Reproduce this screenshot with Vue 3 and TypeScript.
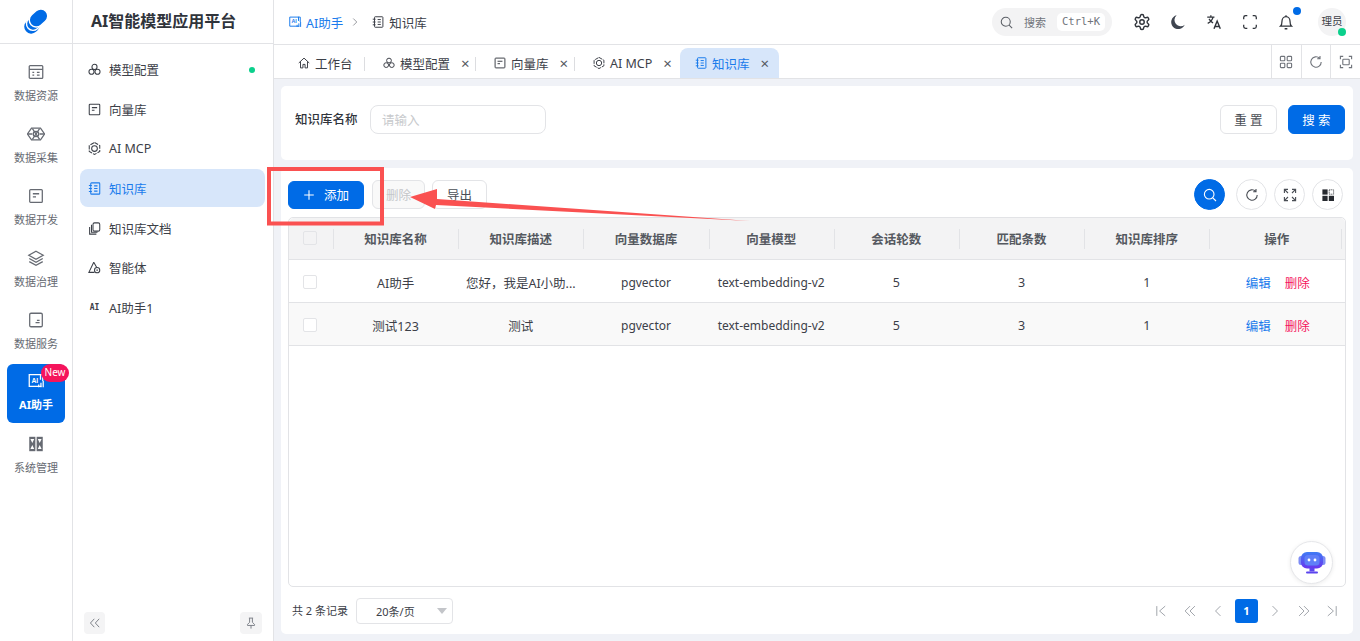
<script setup lang="ts">
const railItems = [
  { label: '数据资源', icon: 'resource' },
  { label: '数据采集', icon: 'collect' },
  { label: '数据开发', icon: 'vector' },
  { label: '数据治理', icon: 'layers' },
  { label: '数据服务', icon: 'service' },
  { label: 'AI助手', icon: 'ai', active: true },
  { label: '系统管理', icon: 'system' },
]

const menuItems = [
  { label: '模型配置', icon: 'model', dot: true },
  { label: '向量库', icon: 'vector' },
  { label: 'AI MCP', icon: 'mcp' },
  { label: '知识库', icon: 'book', active: true },
  { label: '知识库文档', icon: 'docs' },
  { label: '智能体', icon: 'agent' },
  { label: 'AI助手1', icon: 'ai1' },
]

const tabs = [
  { label: '工作台', icon: 'home', width: 91, pad: 23, closable: false },
  { label: '模型配置', icon: 'model', width: 111, pad: 17, closable: true },
  { label: '向量库', icon: 'vector', width: 99, pad: 17, closable: true },
  { label: 'AI MCP', icon: 'mcp', width: 105, pad: 17, closable: true },
  { label: '知识库', icon: 'book', width: 99, pad: 14, closable: true, active: true },
]

const columns = ['知识库名称', '知识库描述', '向量数据库', '向量模型', '会话轮数', '匹配条数', '知识库排序', '操作']

const rows = [
  { name: 'AI助手', desc: '您好，我是AI小助...', db: 'pgvector', model: 'text-embedding-v2', turns: 5, match: 3, sort: 1 },
  { name: '测试123', desc: '测试', db: 'pgvector', model: 'text-embedding-v2', turns: 5, match: 3, sort: 1 },
]

const icons: Record<string, string> = {
  resource: '<rect x="2.5" y="3" width="15" height="14" rx="1"/><path d="M2.5 7h15M6 10.5h2M11 10.5h3M6 13.5h2M11 13.5h3"/>',
  collect: '<path d="M5 3.500h10l4.500 6.500-4.500 6.500H5L.5 10z"/><path d="M6 4l8 12M14 4 6 16M1 10h5M14 10h5"/><circle cx="10" cy="10" r="3"/>',
  vector: '<rect x="3" y="3" width="14" height="14" rx="1"/><path d="M6.500 7.500h7M6.500 11h3.500"/>',
  layers: '<path d="M10 2.500 18 7l-8 4.500L2 7z"/><path d="M2.500 10.500 10 14.800l7.500-4.300M2.500 14 10 18l7.500-4"/>',
  service: '<rect x="3" y="2.500" width="14" height="15" rx="1.500"/><path d="M9.500 13h4.500M11 10.500h3"/>',
  ai: '<path d="M16 16H2.500V3h15v7"/><text x="5" y="12" font-size="7.500" font-weight="700" stroke="none" fill="currentColor" font-family="Liberation Sans">AI</text><path d="M15 2.500v6M13 14v3M15.500 12v5M18 10v7"/>',
  system: '<g stroke="none"><rect x="2.500" y="2" width="6.800" height="16" fill="currentColor"/><rect x="10.700" y="2" width="6.800" height="16" fill="currentColor"/><path d="M3.800 4.500h4.200L5.900 9zM3.800 15.500h4.200L5.900 11zM12 4.500h4.200L14.100 9zM12 15.500h4.200L14.100 11z" fill="#fff"/></g>',
  model: '<circle cx="10" cy="6.500" r="3.400"/><circle cx="6" cy="13" r="3.400"/><circle cx="14" cy="13" r="3.400"/>',
  mcp: '<path d="M10 2 17 6v8l-7 4-7-4V6z" stroke-dasharray="5.500 1.500"/><circle cx="10" cy="10" r="3.800"/>',
  book: '<rect x="5" y="2.500" width="12" height="15" rx="1"/><path d="M2.500 6h4M2.500 10h4M2.500 14h4M9.500 6.500h4.500M9.500 10h4.500M9.500 13.500h4.500"/>',
  docs: '<rect x="8" y="2.500" width="9" height="11" rx="2"/><path d="M6 5v10h8M3.500 8v9.500h9"/>',
  agent: '<path d="M9 3 2.500 16.500H10M9 3l4 7"/><circle cx="13.500" cy="13.500" r="3.500"/><path d="M12.500 13.500h2"/>',
  home: '<path d="M2.500 10 10 3l7.500 7M5 8v9h3.500v-5h3v5H15V8"/>',
  settings: '<g transform="scale(.833)"><path d="M12.220 2h-.44a2 2 0 0 0-2 2v.18a2 2 0 0 1-1 1.730l-.43.25a2 2 0 0 1-2 0l-.15-.08a2 2 0 0 0-2.730.73l-.22.38a2 2 0 0 0 .73 2.730l.15.1a2 2 0 0 1 1 1.720v.51a2 2 0 0 1-1 1.740l-.15.09a2 2 0 0 0-.73 2.730l.22.38a2 2 0 0 0 2.730.73l.15-.08a2 2 0 0 1 2 0l.43.25a2 2 0 0 1 1 1.730V20a2 2 0 0 0 2 2h.44a2 2 0 0 0 2-2v-.18a2 2 0 0 1 1-1.730l.43-.25a2 2 0 0 1 2 0l.15.08a2 2 0 0 0 2.730-.73l.22-.39a2 2 0 0 0-.73-2.730l-.15-.08a2 2 0 0 1-1-1.740v-.5a2 2 0 0 1 1-1.740l.15-.09a2 2 0 0 0 .73-2.730l-.22-.38a2 2 0 0 0-2.730-.73l-.15.08a2 2 0 0 1-2 0l-.43-.25a2 2 0 0 1-1-1.730V4a2 2 0 0 0-2-2z" stroke-width="1.900"/><circle cx="12" cy="12" r="3" stroke-width="1.900"/></g>',
  bell: '<path d="M4 14.500c1.200-1 1.500-2.500 1.500-5C5.500 6.500 7.300 4 10 4s4.500 2.500 4.500 5.500c0 2.500.3 4 1.500 5z"/><path d="M8.500 17.500h3M10 2.500V4"/>',
  screen: '<path d="M3 7V5a2 2 0 0 1 2-2h2M13 3h2a2 2 0 0 1 2 2v2M17 13v2a2 2 0 0 1-2 2h-2M7 17H5a2 2 0 0 1-2-2v-2"/>',
  translate: '<path d="M2.500 4.500h8M6.500 2.500v2M9 4.500c-.8 3-3 5.500-6 7M4.500 6.500c1 2 2.500 3.500 4.500 4.500"/><path d="M10 17.500l3.500-8.500 3.500 8.500M11.200 15h4.600" stroke-width="1.600"/>',
  grid: '<rect x="3" y="3" width="5.500" height="5.500" rx="1"/><rect x="11.500" y="3" width="5.500" height="5.500" rx="1"/><rect x="3" y="11.500" width="5.500" height="5.500" rx="1"/><rect x="11.500" y="11.500" width="5.500" height="5.500" rx="1"/>',
  refresh: '<path d="M16.500 10a6.500 6.500 0 1 1-2-4.700M15 2.500v3.500h-3.500"/>',
  capture: '<path d="M3 6.500V3h3.500M13.500 3H17v3.500M17 13.500V17h-3.500M6.500 17H3v-3.500"/><rect x="6" y="6.500" width="8" height="7" rx="1"/>',
  search: '<circle cx="9" cy="9" r="6"/><path d="m13.500 13.500 4 4"/>',
  expand: '<path d="M3 7.500V3h4.500M3 3l4.500 4.500M12.500 3H17v4.500M17 3l-4.500 4.500M3 12.500V17h4.500M3 17l4.500-4.500M17 12.500V17h-4.500M17 17l-4.500-4.500"/>',
  first: '<path d="M4 3v14M16 3 8 10l8 7"/>',
  prev2: '<path d="M10 3 3 10l7 7M17 3l-7 7 7 7"/>',
  prev: '<path d="M13.500 3 6.500 10l7 7"/>',
  next: '<path d="m6.500 3 7 7-7 7"/>',
  next2: '<path d="m3 3 7 7-7 7M10 3l7 7-7 7"/>',
  last: '<path d="M16 3v14M4 3l8 7-8 7"/>',
  pin: '<path d="M7 3h6M8 3v6l-3 3v1.500h10V12l-3-3V3M10 13.500V18"/>',
  chevrons: '<path d="M9 4 3.500 10 9 16M16 4l-5.500 6 5.500 6"/>',
  plus: '<path d="M10 2v16M2 10h16"/>',
}
</script>

<template>
  <div class="app">
    <aside class="rail">
      <div class="logo">
        <svg width="26" height="26" viewBox="0 0 26 26">
          <rect x="1" y="10" width="16" height="14" rx="7" transform="rotate(-42 9 17)" fill="#006be6" />
          <rect x="3" y="7" width="17" height="13" rx="6.500" transform="rotate(-42 11.500 13.500)" fill="#006be6" stroke="#fff" stroke-width="1.400" />
          <rect x="5.500" y="2" width="20" height="14" rx="7" transform="rotate(-42 15.500 9)" fill="#006be6" stroke="#fff" stroke-width="1.400" />
        </svg>
      </div>
      <nav class="rail-nav">
        <div v-for="item in railItems" :key="item.label" class="rail-item" :class="{ active: item.active }">
          <svg class="rail-icon" viewBox="0 0 20 20" v-html="icons[item.icon]"></svg>
          <span>{{ item.label }}</span>
          <em v-if="item.active" class="new-badge">New</em>
        </div>
      </nav>
    </aside>

    <aside class="menu">
      <div class="menu-title">AI智能模型应用平台</div>
      <ul class="menu-list">
        <li v-for="item in menuItems" :key="item.label" class="menu-item" :class="{ active: item.active }">
          <b v-if="item.icon === 'ai1'" class="ai-mark">AI</b>
          <svg v-else class="menu-icon" viewBox="0 0 20 20" v-html="icons[item.icon]"></svg>
          <span>{{ item.label }}</span>
          <i v-if="item.dot" class="green-dot"></i>
        </li>
      </ul>
      <div class="menu-foot">
        <button class="foot-btn small">
          <svg viewBox="0 0 20 20" v-html="icons.chevrons"></svg>
        </button>
        <button class="foot-btn">
          <svg viewBox="0 0 20 20" v-html="icons.pin"></svg>
        </button>
      </div>
    </aside>

    <main class="main">
      <header class="topbar">
        <div class="crumbs">
          <svg class="crumb-icon blue" viewBox="0 0 20 20" v-html="icons.ai"></svg>
          <span class="blue">AI助手</span>
          <svg class="crumb-arrow" viewBox="0 0 20 20" v-html="icons.next"></svg>
          <svg class="crumb-icon" viewBox="0 0 20 20" v-html="icons.book"></svg>
          <span>知识库</span>
        </div>
        <div class="top-tools">
          <div class="global-search">
            <svg viewBox="0 0 20 20" v-html="icons.search"></svg>
            <span>搜索</span>
            <kbd>Ctrl+K</kbd>
          </div>
          <svg class="top-icon" viewBox="0 0 20 20" v-html="icons.settings"></svg>
          <svg class="top-icon" viewBox="0 0 20 20">
            <path d="M8.500 2.500a7.800 7.800 0 1 0 9 10.500 6.300 6.300 0 0 1-9-10.500z" fill="#3f4550" stroke="none" />
          </svg>
          <svg class="top-icon" viewBox="0 0 20 20" v-html="icons.translate"></svg>
          <svg class="top-icon" viewBox="0 0 20 20" v-html="icons.screen"></svg>
          <div class="bell">
            <svg class="top-icon" viewBox="0 0 20 20" v-html="icons.bell"></svg>
            <i></i>
          </div>
          <div class="avatar">理员<i></i></div>
        </div>
      </header>

      <div class="tabbar">
        <div class="tabs">
          <div
            v-for="tab in tabs"
            :key="tab.label"
            class="tab"
            :class="{ active: tab.active }"
            :style="{ width: tab.width + 'px', paddingLeft: tab.pad + 'px' }"
          >
            <svg viewBox="0 0 20 20" v-html="icons[tab.icon]"></svg>
            <span>{{ tab.label }}</span>
            <small v-if="tab.closable">×</small>
          </div>
        </div>
        <div class="tab-tools">
          <span><svg viewBox="0 0 20 20" v-html="icons.grid"></svg></span>
          <span><svg viewBox="0 0 20 20" v-html="icons.refresh"></svg></span>
          <span><svg viewBox="0 0 20 20" v-html="icons.capture"></svg></span>
        </div>
      </div>

      <div class="content">
        <section class="card filter">
          <label>知识库名称</label>
          <div class="fake-input">请输入</div>
          <div class="filter-actions">
            <button class="btn plain wide">重 置</button>
            <button class="btn primary wide">搜 索</button>
          </div>
        </section>

        <section class="card list">
          <div class="toolbar">
            <button class="btn primary add">
              <svg class="plus" viewBox="0 0 20 20" v-html="icons.plus"></svg>添加
            </button>
            <button class="btn plain disabled">删除</button>
            <button class="btn plain">导出</button>
            <div class="round-tools">
              <span class="round solid"><svg viewBox="0 0 20 20" v-html="icons.search"></svg></span>
              <span class="round"><svg viewBox="0 0 20 20" v-html="icons.refresh"></svg></span>
              <span class="round"><svg viewBox="0 0 20 20" v-html="icons.expand"></svg></span>
              <span class="round">
                <svg viewBox="0 0 20 20" class="filled">
                  <rect x="3" y="3" width="6.500" height="6.500" /><rect x="3" y="11" width="6.500" height="6.500" />
                  <rect x="11" y="11" width="6.500" height="6.500" />
                  <rect x="11.500" y="3.500" width="5.500" height="5.500" fill="none" stroke="#26292f" stroke-width="1" stroke-dasharray="1.500 1" />
                </svg>
              </span>
            </div>
          </div>

          <div class="table">
            <div class="tr head">
              <div class="td check"><i class="box"></i></div>
              <div v-for="col in columns" :key="col" class="td">{{ col }}</div>
            </div>
            <div v-for="(row, index) in rows" :key="row.name" class="tr" :class="{ stripe: index % 2 === 1 }">
              <div class="td check"><i class="box"></i></div>
              <div class="td">{{ row.name }}</div>
              <div class="td">{{ row.desc }}</div>
              <div class="td latin">{{ row.db }}</div>
              <div class="td latin">{{ row.model }}</div>
              <div class="td">{{ row.turns }}</div>
              <div class="td">{{ row.match }}</div>
              <div class="td">{{ row.sort }}</div>
              <div class="td ops"><a>编辑</a><a class="danger">删除</a></div>
            </div>
            <button class="bot">
              <svg width="28" height="22" viewBox="0 0 28 22">
                <defs>
                  <linearGradient id="botBody" x1="0" y1="0" x2="0" y2="1">
                    <stop offset="0" stop-color="#3f7cf5" />
                    <stop offset="1" stop-color="#6a35ee" />
                  </linearGradient>
                </defs>
                <rect x="0.500" y="4" width="5" height="9" rx="2.500" fill="#7d8cf5" />
                <rect x="22.500" y="4" width="5" height="9" rx="2.500" fill="#7d8cf5" />
                <rect x="3" y="0" width="22" height="16.500" rx="6" fill="url(#botBody)" />
                <rect x="11.500" y="16" width="5" height="3.500" fill="#5b45ee" />
                <rect x="8" y="19.500" width="12" height="2" rx="1" fill="#5b45ee" />
                <rect x="6.500" y="3" width="15" height="10.500" rx="3.500" fill="#5f7ff8" />
                <circle cx="11" cy="8" r="1.400" fill="#fff" />
                <circle cx="17" cy="8" r="1.400" fill="#fff" />
              </svg>
            </button>
          </div>

          <div class="pager">
            <span class="total">共 2 条记录</span>
            <div class="page-size">20条/页<i></i></div>
            <div class="page-nav">
              <svg viewBox="0 0 20 20" v-html="icons.first"></svg>
              <svg viewBox="0 0 20 20" v-html="icons.prev2"></svg>
              <svg viewBox="0 0 20 20" v-html="icons.prev"></svg>
              <b>1</b>
              <svg viewBox="0 0 20 20" v-html="icons.next"></svg>
              <svg viewBox="0 0 20 20" v-html="icons.next2"></svg>
              <svg viewBox="0 0 20 20" v-html="icons.last"></svg>
            </div>
          </div>
        </section>
      </div>
    </main>

    <!-- tutorial annotation drawn over the screenshot -->
    <svg class="annotation" width="1360" height="641" viewBox="0 0 1360 641">
      <rect x="269" y="169" width="113" height="54.500" fill="none" stroke="#fa5151" stroke-width="4" />
      <path d="M750 221 437 199 437 189 410 197 435 209 436 205z" fill="#fa5151" />
    </svg>
  </div>
</template>

<style>
html,
body {
  margin: 0;
  height: 100%;
  overflow: hidden;
}
</style>

<style scoped>
* {
  box-sizing: border-box;
}

.app {
  position: relative;
  display: flex;
  width: 1360px;
  height: 641px;
  overflow: hidden;
  background: #fff;
  color: #3c4048;
  font-family: 'Noto Sans', 'Noto Sans CJK SC', sans-serif;
  font-size: 12.500px;
}

svg {
  fill: none;
  stroke: currentColor;
  stroke-width: 1.400;
}

/* left rail */
.rail {
  width: 73px;
  flex: none;
  border-right: 1px solid #e2e3e6;
}

.logo {
  height: 44px;
  display: flex;
  align-items: center;
  justify-content: center;
  border-bottom: 1px solid #e2e3e6;
}

.logo svg {
  stroke: none;
}

.rail-nav {
  display: flex;
  flex-direction: column;
  gap: 3px;
  padding: 10px 7px 0;
}

.rail-item {
  position: relative;
  height: 59px;
  width: 58px;
  border-radius: 6px;
  display: flex;
  flex-direction: column;
  align-items: center;
  padding-top: 9px;
  gap: 6px;
  font-size: 11px;
  color: #666a72;
}

.rail-icon {
  width: 18px;
  height: 18px;
}

.rail-item.active {
  background: #006be6;
  color: #fff;
  font-weight: 700;
  padding-top: 8px;
}

.new-badge {
  position: absolute;
  top: 0;
  right: -4px;
  width: 28px;
  height: 18px;
  line-height: 17px;
  border-radius: 9px;
  background: #f5145c;
  color: #fff;
  font-size: 10px;
  font-style: normal;
  font-weight: 400;
  text-align: center;
}

/* second menu */
.menu {
  width: 201px;
  flex: none;
  display: flex;
  flex-direction: column;
  border-right: 1px solid #e2e3e6;
}

.menu-title {
  height: 44px;
  border-bottom: 1px solid #e2e3e6;
  padding-left: 18px;
  line-height: 43px;
  font-size: 16px;
  font-weight: 700;
  color: #30343b;
}

.menu-list {
  list-style: none;
  margin: 0;
  padding: 6.500px 8px 0 7px;
  display: flex;
  flex-direction: column;
  gap: 1.650px;
  flex: 1;
}

.menu-item {
  height: 38px;
  padding: 0 10px 0 7px;
  border-radius: 8px;
  display: flex;
  align-items: center;
  gap: 7px;
}

.menu-icon {
  width: 15px;
  height: 15px;
  flex: none;
}

.ai-mark {
  width: 15px;
  flex: none;
  text-align: center;
  font-family: 'DejaVu Sans Mono', monospace;
  font-size: 8px;
  font-weight: 700;
}

.menu-item.active {
  background: #d7e6fa;
  color: #1a7bec;
}

.green-dot {
  margin-left: auto;
  width: 6px;
  height: 6px;
  border-radius: 50%;
  background: #0bd08c;
}

.menu-foot {
  display: flex;
  justify-content: space-between;
  padding: 0 11px 7px;
}

.foot-btn {
  width: 22px;
  height: 22px;
  padding: 4px;
  border: none;
  border-radius: 4px;
  background: #f4f4f5;
  color: #7c8087;
}

.foot-btn.small {
  width: 21px;
}

.foot-btn svg {
  display: block;
  width: 14px;
  height: 14px;
}

/* main */
.main {
  flex: 1;
  min-width: 0;
  display: flex;
  flex-direction: column;
}

.topbar {
  height: 45px;
  flex: none;
  display: flex;
  align-items: center;
  justify-content: space-between;
  padding: 0 14px;
  border-bottom: 1px solid #e2e3e6;
}

.crumbs {
  display: flex;
  align-items: center;
  gap: 4px;
}

.blue {
  color: #1a7bec;
}

.crumb-icon {
  width: 14px;
  height: 14px;
}

.crumb-arrow {
  width: 10px;
  height: 10px;
  margin: 0 7px 0 3px;
  color: #6b6f76;
}

.top-tools {
  display: flex;
  align-items: center;
  gap: 18px;
}

.global-search {
  width: 120px;
  height: 28px;
  margin-right: 3px;
  padding: 0 7px;
  border-radius: 14px;
  background: #f3f3f4;
  display: flex;
  align-items: center;
  font-size: 11px;
  color: #70747b;
}

.global-search svg {
  width: 15px;
  height: 15px;
  margin-right: 10px;
  color: #5c6067;
}

.global-search kbd {
  margin-left: auto;
  width: 48px;
  height: 18px;
  border-radius: 5px;
  background: #fff;
  text-align: center;
  line-height: 17px;
  font-family: 'DejaVu Sans Mono', monospace;
  font-size: 10.500px;
}

.top-icon {
  width: 18px;
  height: 18px;
  display: block;
  color: #30343b;
}

.bell {
  position: relative;
}

.bell i {
  position: absolute;
  top: -6px;
  right: -6px;
  width: 8px;
  height: 8px;
  border-radius: 50%;
  background: #006be6;
}

.avatar {
  position: relative;
  width: 28px;
  height: 28px;
  margin-left: 5px;
  border-radius: 50%;
  background: #f3f3f4;
  text-align: center;
  line-height: 27px;
  font-size: 10.500px;
}

.avatar i {
  position: absolute;
  right: 0;
  bottom: 0;
  width: 8px;
  height: 8px;
  border-radius: 50%;
  background: #0bd08c;
}

/* tabs */
.tabbar {
  height: 34px;
  flex: none;
  display: flex;
  justify-content: space-between;
  border-bottom: 1px solid #e2e3e6;
}

.tabs {
  display: flex;
  align-items: flex-end;
}

.tab {
  position: relative;
  height: 30px;
  display: flex;
  align-items: center;
  gap: 4px;
}

.tab svg {
  width: 14px;
  height: 14px;
}

.tab small {
  margin-left: 7px;
  font-size: 15px;
  color: #55595f;
}

.tab:not(.active):not(:nth-child(4))::after {
  content: '';
  position: absolute;
  right: 0;
  top: 9px;
  height: 14px;
  width: 1px;
  background: #dcdde0;
}

.tab.active {
  border-radius: 8px 8px 0 0;
  background: #d7e6fa;
  color: #1a7bec;
}

.tab-tools {
  display: flex;
}

.tab-tools span {
  width: 29.700px;
  border-left: 1px solid #e2e3e6;
  display: flex;
  align-items: center;
  justify-content: center;
  color: #70747b;
}

.tab-tools svg {
  width: 16px;
  height: 16px;
}

.content {
  flex: 1;
  min-height: 0;
  display: flex;
  flex-direction: column;
  gap: 8px;
  padding: 7px;
  background: #f0f2f7;
}

.card {
  background: #fff;
  border-radius: 5px;
}

.filter {
  height: 74px;
  flex: none;
  display: flex;
  align-items: flex-start;
  padding: 19px 7px 0 14px;
}

.filter label {
  width: 75px;
  line-height: 30px;
  font-weight: 500;
  color: #30343b;
}

.fake-input {
  width: 176px;
  height: 29px;
  border: 1px solid #e3e4e7;
  border-radius: 8px;
  padding-left: 11px;
  line-height: 29px;
  color: #c8cacd;
}

.filter-actions {
  margin-left: auto;
  margin-right: 1px;
  display: flex;
  gap: 11px;
}

.btn {
  height: 29px;
  padding: 0;
  border-radius: 6px;
  border: 1px solid #e3e4e7;
  background: #fff;
  font: inherit;
  color: #4a4e55;
  width: 55px;
}

.btn.primary {
  background: #006be6;
  border-color: #006be6;
  color: #fff;
}

.btn.wide {
  width: 57px;
}

.btn.disabled {
  width: 53px;
  background: #f9f9f9;
  color: #c4c6c9;
}

.list {
  flex: 1;
  min-height: 0;
  display: flex;
  flex-direction: column;
  padding: 12px 7px 0;
}

.toolbar {
  display: flex;
  align-items: center;
  gap: 7px;
  height: 29px;
  margin-bottom: 8px;
}

.btn.add {
  width: 76px;
  height: 28px;
  margin-right: 1px;
  display: flex;
  align-items: center;
  justify-content: center;
}

.plus {
  width: 12px;
  height: 12px;
  margin-right: 9px;
  stroke-width: 1.800;
}

.round-tools {
  margin-left: auto;
  margin-right: 3px;
  display: flex;
  gap: 7px;
}

.round {
  width: 31px;
  height: 31px;
  border: 1px solid #e3e4e7;
  border-radius: 50%;
  display: flex;
  align-items: center;
  justify-content: center;
  color: #4a4e55;
}

.round:first-child {
  margin-right: 4px;
}

.round svg {
  width: 16px;
  height: 16px;
}

.round svg.filled {
  fill: #26292f;
  stroke: none;
}

.round.solid {
  background: #006be6;
  border-color: #006be6;
  color: #fff;
}

.table {
  position: relative;
  flex: 1;
  min-height: 0;
  border: 1px solid #e2e3e6;
  border-radius: 5px;
}

.tr {
  display: grid;
  grid-template-columns: 45px repeat(7, 125.200px) 1fr;
  height: 43px;
  border-bottom: 1px solid #e2e3e6;
}

.tr.head {
  height: 42px;
  background: #f3f3f4;
  font-weight: 700;
  border-radius: 5px 5px 0 0;
}

.tr.stripe {
  background: #f9f9f9;
}

.td {
  position: relative;
  min-width: 0;
  display: flex;
  align-items: center;
  justify-content: center;
  padding: 2px 7px 0 5px;
  color: #3c4048;
  white-space: nowrap;
}

.td.latin {
  font-size: 12px;
}

.head .td {
  color: #555960;
  padding-top: 0;
  padding-bottom: 1px;
}

.head .td::after {
  content: '';
  position: absolute;
  right: 0;
  top: 11px;
  height: 20px;
  width: 1px;
  background: #e2e3e6;
}

.head .td:last-child::after {
  right: 3px;
}

.td.check {
  padding-left: 0;
  padding-right: 4px;
}

.box {
  width: 14px;
  height: 14px;
  border: 1px solid #e3e4e7;
  border-radius: 2px;
  background: #fff;
}

.head .box {
  background: #f3f3f4;
}

.td.ops {
  gap: 14px;
  padding-left: 0;
  padding-right: 0;
}

.ops a {
  color: #1a7bec;
}

.ops a.danger {
  color: #f5145c;
}

.bot {
  position: absolute;
  right: 12px;
  bottom: 2px;
  width: 43px;
  height: 43px;
  padding: 0;
  border: 1px solid #e6e7ea;
  border-radius: 50%;
  background: #fff;
  display: flex;
  align-items: center;
  justify-content: center;
  box-shadow: 0 1px 4px rgba(0, 0, 0, 0.08);
}

.bot svg {
  stroke: none;
}

.pager {
  height: 47px;
  flex: none;
  display: flex;
  align-items: center;
  font-size: 11px;
}

.total {
  margin-left: 4px;
  width: 64px;
  margin-top: -2px;
}

.page-size {
  position: relative;
  width: 97px;
  height: 26px;
  border: 1px solid #e3e4e7;
  border-radius: 4px;
  padding-left: 19px;
  line-height: 26px;
}

.page-size i {
  position: absolute;
  right: 5px;
  top: 9px;
  border: 5px solid transparent;
  border-top: 6px solid #c3c5c9;
  border-bottom: 0;
}

.page-nav {
  margin-left: auto;
  margin-right: 7px;
  display: flex;
  align-items: center;
  gap: 14.500px;
  color: #a0a4aa;
}

.page-nav svg {
  width: 14px;
  height: 14px;
}

.page-nav b {
  width: 23px;
  height: 24px;
  margin: 0 -4.500px;
  border-radius: 3px;
  background: #006be6;
  color: #fff;
  text-align: center;
  line-height: 24px;
}

.annotation {
  position: absolute;
  top: 0;
  left: 0;
  pointer-events: none;
  stroke: none;
}
</style>
